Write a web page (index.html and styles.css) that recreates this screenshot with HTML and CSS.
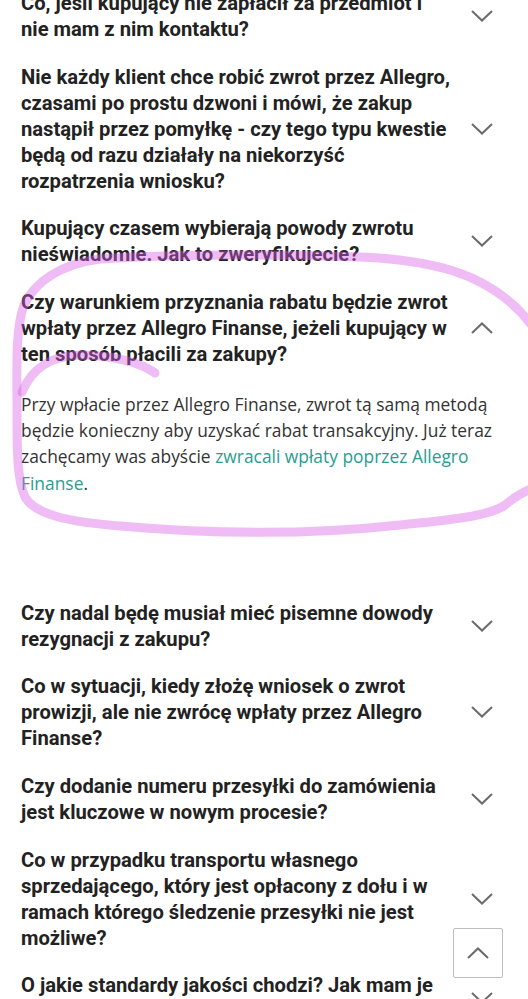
FILE: index.html
```html
<!DOCTYPE html>
<html lang="pl">
<head>
<meta charset="utf-8">
<title>FAQ</title>
<link rel="stylesheet" href="styles.css">
</head>
<body>
<div class="faq">
  <div class="item">
    <div class="q"><span class="qt">Co, jeśli kupujący nie zapłacił za przedmiot i nie mam z nim kontaktu?</span><svg class="chev" viewBox="0 0 22 12"><path d="M1 1 L11 10.5 L21 1"/></svg></div>
  </div>
  <div class="item">
    <div class="q"><span class="qt">Nie każdy klient chce robić zwrot przez Allegro, czasami po prostu dzwoni i mówi, że zakup nastąpił przez pomyłkę - czy tego typu kwestie będą od razu działały na niekorzyść rozpatrzenia wniosku?</span><svg class="chev" viewBox="0 0 22 12"><path d="M1 1 L11 10.5 L21 1"/></svg></div>
  </div>
  <div class="item">
    <div class="q"><span class="qt">Kupujący czasem wybierają powody zwrotu nieświadomie. Jak to zweryfikujecie?</span><svg class="chev" viewBox="0 0 22 12"><path d="M1 1 L11 10.5 L21 1"/></svg></div>
  </div>
  <div class="item open">
    <div class="q"><span class="qt">Czy warunkiem przyznania rabatu będzie zwrot wpłaty przez Allegro Finanse, jeżeli kupujący w ten sposób płacili za zakupy?</span><svg class="chev" viewBox="0 0 22 12"><path d="M1 11 L11 1.5 L21 11"/></svg></div>
    <p class="answer">Przy wpłacie przez Allegro Finanse, zwrot tą samą metodą będzie konieczny aby uzyskać rabat transakcyjny. Już teraz zachęcamy was abyście <a href="#">zwracali wpłaty poprzez Allegro Finanse</a>.</p>
  </div>
  <div class="item">
    <div class="q"><span class="qt">Czy nadal będę musiał mieć pisemne dowody rezygnacji z zakupu?</span><svg class="chev" viewBox="0 0 22 12"><path d="M1 1 L11 10.5 L21 1"/></svg></div>
  </div>
  <div class="item">
    <div class="q"><span class="qt">Co w sytuacji, kiedy złożę wniosek o zwrot prowizji, ale nie zwrócę wpłaty przez Allegro Finanse?</span><svg class="chev" viewBox="0 0 22 12"><path d="M1 1 L11 10.5 L21 1"/></svg></div>
  </div>
  <div class="item">
    <div class="q"><span class="qt">Czy dodanie numeru przesyłki do zamówienia jest kluczowe w nowym procesie?</span><svg class="chev" viewBox="0 0 22 12"><path d="M1 1 L11 10.5 L21 1"/></svg></div>
  </div>
  <div class="item">
    <div class="q"><span class="qt">Co w przypadku transportu własnego sprzedającego, który jest opłacony z dołu i w ramach którego śledzenie przesyłki nie jest możliwe?</span><svg class="chev" viewBox="0 0 22 12"><path d="M1 1 L11 10.5 L21 1"/></svg></div>
  </div>
  <div class="item">
    <div class="q"><span class="qt">O jakie standardy jakości chodzi? Jak mam je spełnić?</span><svg class="chev" viewBox="0 0 22 12"><path d="M1 1 L11 10.5 L21 1"/></svg></div>
  </div>
</div>

<button class="totop" type="button" aria-label="Do góry"><svg viewBox="0 0 22 12"><path d="M1 11 L11 1.5 L21 11"/></svg></button>

<svg class="scribble" viewBox="0 0 528 999" aria-hidden="true">
  <path d="M540,338 C525,312 505,295 480,282 C450,266 410,259 360,257 C280,254 170,254 100,259 C60,264 35,282 24,305 C15,330 17,370 17,410 C17,450 17,480 25,497 C35,515 70,522 120,526 C200,533 300,536 400,525 C450,520 490,516 505,505 C515,497 522,492 540,485"/>
  <path d="M155,373 C140,362 110,355 80,355 C50,356 32,368 22,392"/>
</svg>
</body>
</html>
```

FILE: styles.css
```css
html, body {
  margin: 0;
  padding: 0;
  background: #ffffff;
  overflow: hidden;
}

body {
  width: 528px;
  height: 999px;
  position: relative;
}

.faq {
  margin-top: -21px;
}

.q {
  display: flex;
  align-items: center;
  gap: 17px;
  padding: 11px 35px 10.7px 21px;
}

.qt {
  flex: 1;
  font-family: Roboto, "Liberation Sans", sans-serif;
  font-weight: 700;
  font-size: 20.2px;
  line-height: 26px;
  color: #222222;
}

.chev {
  width: 22px;
  height: 12px;
  flex: none;
  fill: none;
  stroke: #6b6b6b;
  stroke-width: 2;
}

.answer {
  margin: 0;
  padding: 12.8px 20px 92.7px 21px;
  font-family: "Open Sans", "Noto Sans", sans-serif;
  font-size: 17.4px;
  line-height: 26.33px;
  color: #333333;
}

.answer a {
  color: #2a9d8f;
  text-decoration: none;
}

.totop {
  position: fixed;
  right: 25px;
  bottom: 21px;
  width: 50px;
  height: 50px;
  margin: 0;
  padding: 0;
  background: #ffffff;
  border: 1px solid #bdbdbd;
  border-radius: 2px;
  display: flex;
  align-items: center;
  justify-content: center;
}

.totop svg {
  width: 22px;
  height: 12px;
  fill: none;
  stroke: #6b6b6b;
  stroke-width: 2;
}

.scribble {
  position: absolute;
  left: 0;
  top: 0;
  width: 528px;
  height: 999px;
  pointer-events: none;
  fill: none;
  stroke: rgb(217, 95, 230);
  stroke-opacity: 0.42;
  stroke-width: 9;
  stroke-linecap: round;
  stroke-linejoin: round;
}
```
